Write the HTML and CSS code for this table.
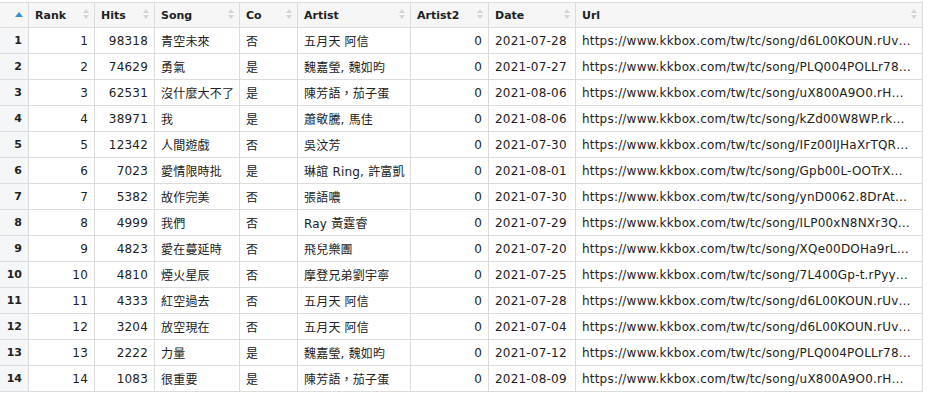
FILE: index.html
```html
<!DOCTYPE html>
<html>
<head>
<meta charset="utf-8">
<link rel="stylesheet" href="styles.css">
</head>
<body>
<div class="wrap">
<table class="grid">
<colgroup>
<col class="c-idx"><col class="c-rank"><col class="c-hits"><col class="c-song"><col class="c-co"><col class="c-artist"><col class="c-artist2"><col class="c-date"><col class="c-url">
</colgroup>
<thead>
<tr>
<th class="idx"><svg class="sort-active" width="8" height="5" viewBox="0 0 8 5"><path d="M0 5 L4 0 L8 5 Z" fill="#3a8fd9"/></svg></th>
<th>Rank<svg class="sort" width="6" height="10" viewBox="0 0 6 10"><path d="M0 4 L3 0 L6 4 Z M0 6 L3 10 L6 6 Z" fill="#d4d4d4"/></svg></th>
<th>Hits<svg class="sort" width="6" height="10" viewBox="0 0 6 10"><path d="M0 4 L3 0 L6 4 Z M0 6 L3 10 L6 6 Z" fill="#d4d4d4"/></svg></th>
<th>Song<svg class="sort" width="6" height="10" viewBox="0 0 6 10"><path d="M0 4 L3 0 L6 4 Z M0 6 L3 10 L6 6 Z" fill="#d4d4d4"/></svg></th>
<th>Co<svg class="sort" width="6" height="10" viewBox="0 0 6 10"><path d="M0 4 L3 0 L6 4 Z M0 6 L3 10 L6 6 Z" fill="#d4d4d4"/></svg></th>
<th>Artist<svg class="sort" width="6" height="10" viewBox="0 0 6 10"><path d="M0 4 L3 0 L6 4 Z M0 6 L3 10 L6 6 Z" fill="#d4d4d4"/></svg></th>
<th>Artist2<svg class="sort" width="6" height="10" viewBox="0 0 6 10"><path d="M0 4 L3 0 L6 4 Z M0 6 L3 10 L6 6 Z" fill="#d4d4d4"/></svg></th>
<th>Date<svg class="sort" width="6" height="10" viewBox="0 0 6 10"><path d="M0 4 L3 0 L6 4 Z M0 6 L3 10 L6 6 Z" fill="#d4d4d4"/></svg></th>
<th>Url<svg class="sort" width="6" height="10" viewBox="0 0 6 10"><path d="M0 4 L3 0 L6 4 Z M0 6 L3 10 L6 6 Z" fill="#d4d4d4"/></svg></th>
</tr>
</thead>
<tbody>
<tr><td class="idx">1</td><td class="num">1</td><td class="num">98318</td><td>青空未來</td><td>否</td><td>五月天 阿信</td><td class="num">0</td><td>2021-07-28</td><td>https://www.kkbox.com/tw/tc/song/d6L00KOUN.rUv…</td></tr>
<tr><td class="idx">2</td><td class="num">2</td><td class="num">74629</td><td>勇氣</td><td>是</td><td>魏嘉瑩, 魏如昀</td><td class="num">0</td><td>2021-07-27</td><td>https://www.kkbox.com/tw/tc/song/PLQ004POLLr78…</td></tr>
<tr><td class="idx">3</td><td class="num">3</td><td class="num">62531</td><td>沒什麼大不了</td><td>是</td><td>陳芳語，茄子蛋</td><td class="num">0</td><td>2021-08-06</td><td>https://www.kkbox.com/tw/tc/song/uX800A9O0.rH…</td></tr>
<tr><td class="idx">4</td><td class="num">4</td><td class="num">38971</td><td>我</td><td>是</td><td>蕭敬騰, 馬佳</td><td class="num">0</td><td>2021-08-06</td><td>https://www.kkbox.com/tw/tc/song/kZd00W8WP.rk…</td></tr>
<tr><td class="idx">5</td><td class="num">5</td><td class="num">12342</td><td>人間遊戲</td><td>否</td><td>吳汶芳</td><td class="num">0</td><td>2021-07-30</td><td>https://www.kkbox.com/tw/tc/song/IFz00IJHaXrTQR…</td></tr>
<tr><td class="idx">6</td><td class="num">6</td><td class="num">7023</td><td>愛情限時批</td><td>是</td><td>琳誼 Ring, 許富凱</td><td class="num">0</td><td>2021-08-01</td><td>https://www.kkbox.com/tw/tc/song/Gpb00L-OOTrX…</td></tr>
<tr><td class="idx">7</td><td class="num">7</td><td class="num">5382</td><td>故作完美</td><td>否</td><td>張語噥</td><td class="num">0</td><td>2021-07-30</td><td>https://www.kkbox.com/tw/tc/song/ynD0062.8DrAt…</td></tr>
<tr><td class="idx">8</td><td class="num">8</td><td class="num">4999</td><td>我們</td><td>否</td><td>Ray 黃霆睿</td><td class="num">0</td><td>2021-07-29</td><td>https://www.kkbox.com/tw/tc/song/ILP00xN8NXr3Q…</td></tr>
<tr><td class="idx">9</td><td class="num">9</td><td class="num">4823</td><td>愛在蔓延時</td><td>否</td><td>飛兒樂團</td><td class="num">0</td><td>2021-07-20</td><td>https://www.kkbox.com/tw/tc/song/XQe00DOHa9rL…</td></tr>
<tr><td class="idx">10</td><td class="num">10</td><td class="num">4810</td><td>煙火星辰</td><td>否</td><td>摩登兄弟劉宇寧</td><td class="num">0</td><td>2021-07-25</td><td>https://www.kkbox.com/tw/tc/song/7L400Gp-t.rPyy…</td></tr>
<tr><td class="idx">11</td><td class="num">11</td><td class="num">4333</td><td>紅空過去</td><td>否</td><td>五月天 阿信</td><td class="num">0</td><td>2021-07-28</td><td>https://www.kkbox.com/tw/tc/song/d6L00KOUN.rUv…</td></tr>
<tr><td class="idx">12</td><td class="num">12</td><td class="num">3204</td><td>放空現在</td><td>否</td><td>五月天 阿信</td><td class="num">0</td><td>2021-07-04</td><td>https://www.kkbox.com/tw/tc/song/d6L00KOUN.rUv…</td></tr>
<tr><td class="idx">13</td><td class="num">13</td><td class="num">2222</td><td>力量</td><td>是</td><td>魏嘉瑩, 魏如昀</td><td class="num">0</td><td>2021-07-12</td><td>https://www.kkbox.com/tw/tc/song/PLQ004POLLr78…</td></tr>
<tr><td class="idx">14</td><td class="num">14</td><td class="num">1083</td><td>很重要</td><td>是</td><td>陳芳語，茄子蛋</td><td class="num">0</td><td>2021-08-09</td><td>https://www.kkbox.com/tw/tc/song/uX800A9O0.rH…</td></tr>
</tbody>
</table>
</div>
</body>
</html>
```
FILE: styles.css
```css
html, body {
  margin: 0;
  padding: 0;
  background: #ffffff;
}
.wrap {
  padding-top: 2px;
}
.grid {
  table-layout: fixed;
  width: 923px;
  border-collapse: separate;
  border-spacing: 0;
  border-top: 1px solid #dcdcdc;
  font-family: "DejaVu Sans", "Noto Sans CJK TC", sans-serif;
  font-size: 12px;
  color: #222;
}
.c-idx { width: 29px; }
.c-rank { width: 66px; }
.c-hits { width: 60px; }
.c-song { width: 85px; }
.c-co { width: 58px; }
.c-artist { width: 113px; }
.c-artist2 { width: 78px; }
.c-date { width: 87px; }
.c-url { width: 347px; }
.grid th, .grid td {
  box-sizing: border-box;
  border-right: 1px solid #dcdcdc;
  border-bottom: 1px solid #dcdcdc;
  padding: 0 6px;
  white-space: nowrap;
  overflow: hidden;
  text-align: left;
}
.grid th {
  position: relative;
  height: 25px;
  background: #f6f6f7;
  font-size: 11px;
  font-weight: bold;
  color: #222;
}
.grid td {
  height: 26px;
  letter-spacing: 0.2px;
}
.grid td.num {
  text-align: right;
}
.grid td.idx {
  background: #f4f6f8;
  font-weight: bold;
  font-size: 11px;
  letter-spacing: 0;
  text-align: right;
}
.sort {
  position: absolute;
  right: 5px;
  top: 6px;
}
.sort-active {
  position: absolute;
  left: 15px;
  top: 9px;
}
```
